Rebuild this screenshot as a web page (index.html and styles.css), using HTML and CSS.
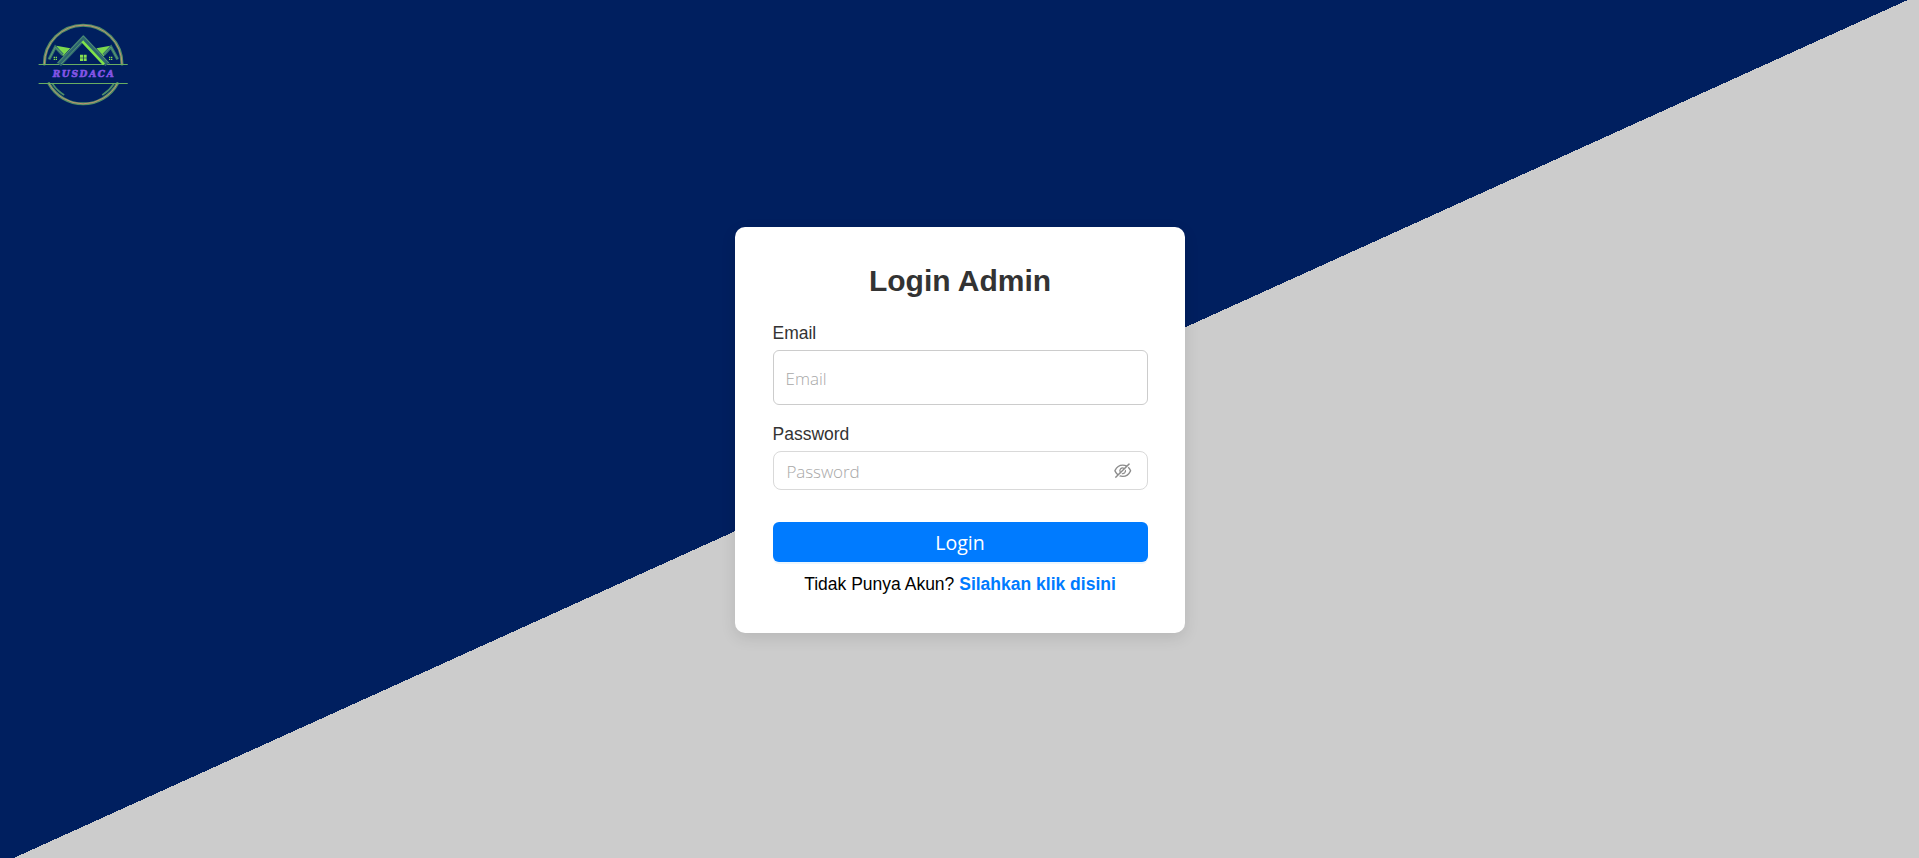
FILE: index.html
```html
<!DOCTYPE html>
<html lang="id">
<head>
<meta charset="utf-8">
<title>Login Admin</title>
<link rel="stylesheet" href="styles.css">
</head>
<body>
<main class="page">
  <svg class="logo" viewBox="0 0 330 300" role="img" aria-label="RUSDACA">
    <g fill="none" stroke-linecap="round">
      <g stroke="#4f8f66" stroke-width="9">
        <path d="M43 147A116 116 0 0 1 276 147"/>
        <path d="M57 206A117 117 0 0 0 262 206"/>
      </g>
      <g stroke="#c08f72" stroke-width="3">
        <path d="M43 147A116 116 0 0 1 276 147"/>
        <path d="M57 206A117 117 0 0 0 262 206"/>
      </g>
      <path d="M68 207Q81 227 101 239M251 207Q238 227 218 239" stroke="#4c8e68" stroke-width="5"/>
      <path d="M27 148.500H292M27 205.500H292" stroke="#69ad62" stroke-width="3"/>
    </g>
    <path d="M79 92L121 100L99 124ZM241 92L199 100L221 124Z" fill="#7bd94e"/>
    <g fill="none">
      <path d="M57 133L76 96L98 119M263 133L243 96L221 119" stroke="#39776c" stroke-width="9"/>
      <path d="M57 133L76 96L98 119M263 133L243 96L221 119" stroke="#68a875" stroke-width="2"/>
      <path d="M87 148L160 71L232 148" stroke="#2d6670" stroke-width="16"/>
      <path d="M82 145L160 63L238 146M93 147L160 76" stroke="#5b9b74" stroke-width="2.500"/>
      <path d="M157 79L222 148" stroke="#80e34a" stroke-width="8"/>
    </g>
    <path d="M150 119h9v9h-9zM161 119h9v9h-9zM150 130h9v8h-9zM161 130h9v8h-9zM71 125h4v4h-4zM77 125h4v4h-4zM71 131h4v4h-4zM77 131h4v4h-4zM237 125h4v4h-4zM243 125h4v4h-4zM237 131h4v4h-4zM243 131h4v4h-4z" fill="#86df50"/>
    <text class="logo-name" x="68" y="185" textLength="183">RUSDACA</text>
  </svg>
  <form class="card">
    <h1 class="title">Login Admin</h1>
    <label class="label" for="email">Email</label>
    <input class="field field-email" id="email" type="email" placeholder="Email">
    <label class="label" for="password">Password</label>
    <div class="field field-password">
      <input class="password-input" id="password" type="password" placeholder="Password">
      <svg class="eye" viewBox="64 64 896 896" fill="currentColor" aria-hidden="true">
        <path d="M942.200 486.200Q889.470 375.110 816.700 305l-50.880 50.880C807.310 395.530 843.450 447.400 874.700 512 791.500 684.200 673.400 766 512 766q-72.670 0-133.870-22.380L323 798.750Q408 838 512 838q288.300 0 430.200-300.300a60.290 60.290 0 0 0 0-51.500zm-63.570-320.640L836 122.880a8 8 0 0 0-11.320 0L715.310 232.200Q624.860 186 512 186q-288.300 0-430.200 300.300a60.300 60.300 0 0 0 0 51.500q56.690 119.400 136.500 191.410L112.480 835a8 8 0 0 0 0 11.310L155.170 889a8 8 0 0 0 11.310 0l712.150-712.120a8 8 0 0 0 0-11.320zM149.300 512C232.600 339.800 350.700 258 512 258c54.540 0 104.130 9.360 149.120 28.390l-70.300 70.300a176 176 0 0 0-238.130 238.130l-83.420 83.420C223.100 637.490 183.300 582.280 149.300 512zm246.700 0a112.110 112.110 0 0 1 146.200-106.690L401.310 546.200A112 112 0 0 1 396 512z"/>
        <path d="M508 624c-3.460 0-6.870-.160-10.250-.470l-52.820 52.820a176.090 176.090 0 0 0 227.420-227.420l-52.820 52.820c.310 3.380.470 6.790.470 10.250a111.940 111.940 0 0 1-112 112z"/>
      </svg>
    </div>
    <button class="submit" type="button">Login</button>
    <p class="signup">Tidak Punya Akun? <a class="signup-link" href="#">Silahkan klik disini</a></p>
  </form>
</main>
</body>
</html>
```
FILE: styles.css
```css
* { box-sizing: border-box; }
body { margin: 0; font-family: "Liberation Sans", Arial, sans-serif; font-size: 17.5px; }
.page {
  position: relative;
  display: flex;
  justify-content: center;
  height: 858px;
  padding: 227px 0 0 1px;
  overflow: hidden;
  background: linear-gradient(155.63deg, #001f5f 50.03%, #ccc 50.03%);
}
.logo { position: absolute; left: 30px; top: 15px; width: 110px; height: 100px; }
.logo-name { font: italic bold 27px "DejaVu Serif", serif; fill: #8455e6; stroke: #8455e6; stroke-width: 1.8px; }
.card {
  display: flex;
  flex-direction: column;
  width: 450px;
  height: 406px;
  padding: 35px 37.5px 0;
  border-radius: 10px;
  background: #fff;
  box-shadow: 0 5px 15px rgba(0, 0, 0, .1);
}
.title { margin: 0 0 19px; font-size: 30px; line-height: 38px; text-align: center; color: #333; }
.label { height: 31px; line-height: 28px; color: #333; }
.field { width: 100%; border: 1px solid #ccc; border-radius: 6px; background: #fff; }
.field-email { height: 55px; padding: 2px 12px 0; margin-bottom: 15px; }
.field-email, .password-input { font-family: "Open Sans", "Noto Sans", sans-serif; font-size: 17px; font-weight: 300; }
.field-password { display: flex; align-items: center; height: 39px; padding: 0 15px 0 13px; border-color: #d9d9d9; border-radius: 8px; }
.password-input { flex: 1; min-width: 0; padding: 2px 0 0; border: 0; background: none; }
.field-email::placeholder, .password-input::placeholder { color: #a8a8a8; opacity: 1; }
.password-input::placeholder { letter-spacing: -.1px; }
.eye { width: 17.5px; height: 17.5px; color: #8c8c8c; }
.submit {
  height: 40px;
  margin-top: 32px;
  padding: 1px 0 0;
  border: 0;
  border-radius: 6px;
  background: #007bff;
  box-shadow: 0 2px 0 rgba(5, 145, 255, .08);
  color: #fff;
  font: 19.5px "Open Sans", "Noto Sans", sans-serif;
}
.signup { margin: 9px 0 0; line-height: 26px; text-align: center; color: #000; }
.signup-link { color: #007bff; font-weight: bold; text-decoration: none; }
```
